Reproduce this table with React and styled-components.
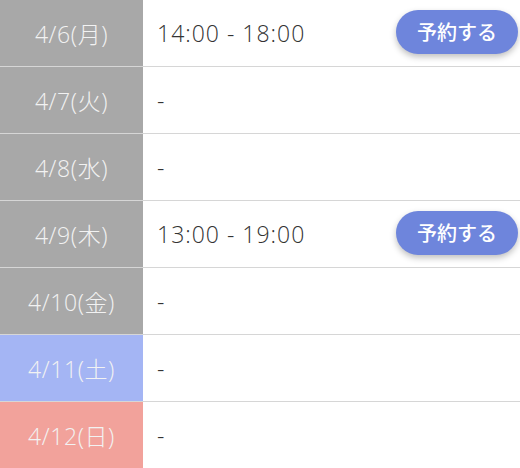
import styled, { createGlobalStyle } from "styled-components";

const days = [
  { date: "4/6(月)", time: "14:00 - 18:00", kind: "weekday" },
  { date: "4/7(火)", time: null, kind: "weekday" },
  { date: "4/8(水)", time: null, kind: "weekday" },
  { date: "4/9(木)", time: "13:00 - 19:00", kind: "weekday" },
  { date: "4/10(金)", time: null, kind: "weekday" },
  { date: "4/11(土)", time: null, kind: "sat" },
  { date: "4/12(日)", time: null, kind: "sun" },
];

const dateColors = {
  weekday: "#a8a8a8",
  sat: "#a4b5f4",
  sun: "#f2a29b",
};

const App = () => {
  return (
    <>
      <GlobalStyle />
      <Schedule>
        {days.map((d) => (
          <Row key={d.date}>
            <DateCell kind={d.kind}>{d.date}</DateCell>
            <SlotCell>
              <Time>{d.time || "-"}</Time>
              {d.time && <ReserveButton>予約する</ReserveButton>}
            </SlotCell>
          </Row>
        ))}
      </Schedule>
    </>
  );
};

const GlobalStyle = createGlobalStyle`
  body {
    margin: 0;
    background: #fff;
    font-family: "Open Sans", "Noto Sans CJK JP", sans-serif;
  }
`;

// Table
const Schedule = styled.div`
  display: flex;
  flex-direction: column;
  width: 520px;
`;

// Row
const Row = styled.div`
  display: grid;
  grid-template-columns: 143px 1fr;
  height: 67px;
  border-bottom: 1px solid #d6d6d6;
  box-sizing: border-box;
`;

// Date cell
const DateCell = styled.div`
  display: flex;
  align-items: center;
  justify-content: center;
  background: ${(props) => dateColors[props.kind]};
  color: #f2f2f2;
  font-size: 23px;
  font-weight: 300;
  letter-spacing: 0.6px;
`;

// Time slot cell
const SlotCell = styled.div`
  display: flex;
  align-items: center;
  justify-content: space-between;
  padding: 0 2px 0 14px;
`;

const Time = styled.span`
  font-size: 23px;
  font-weight: 300;
  letter-spacing: 1px;
  color: #333;
`;

// Button
const ReserveButton = styled.button`
  height: 44px;
  width: 122px;
  border: none;
  border-radius: 22px;
  background: #6e85dc;
  color: #fff;
  font-family: "Noto Sans CJK JP", sans-serif;
  font-size: 20px;
  font-weight: 500;
  box-shadow: 0 3px 6px rgba(0, 0, 0, 0.25);
  margin-bottom: 3px;
`;

export default App;
